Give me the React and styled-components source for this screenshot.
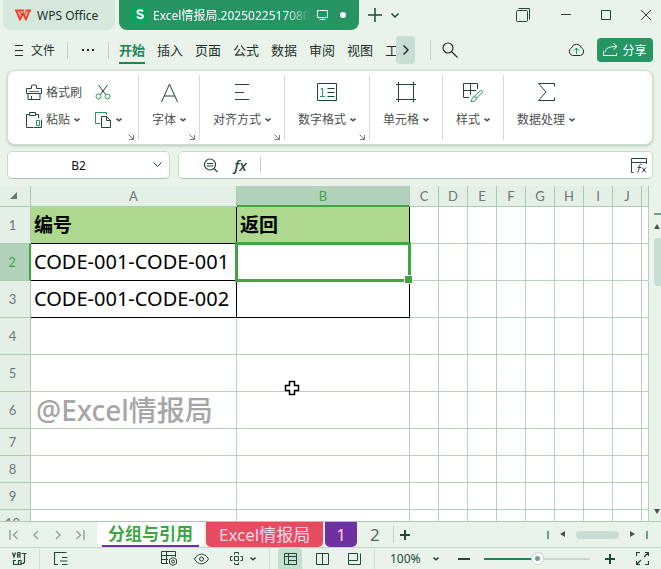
import React, { useState } from 'react'
import styled, { createGlobalStyle, css } from 'styled-components'

const GlobalStyle = createGlobalStyle`
    * {
        box-sizing: border-box;
    }
    html, body {
        margin: 0;
    }
    body {
        background: #e9f3ea;
        color: #24463a;
        font-family: 'Noto Sans', 'Noto Sans CJK SC', sans-serif;
        font-size: 12px;
    }
    button, input, select {
        font-family: inherit;
        font-size: inherit;
        color: inherit;
        background: none;
        border: 0;
        padding: 0;
        margin: 0;
    }
    button {
        display: flex;
        align-items: center;
        justify-content: center;
        flex: none;
        white-space: nowrap;
    }
`

const Window = styled.div`
    display: flex;
    flex-direction: column;
    height: 100vh;
    overflow: hidden;
`

const Icon = styled.svg`
    display: block;
    flex: none;
    fill: none;
    stroke: currentColor;
    stroke-width: ${p => p.$weight || 1};
`

const Spacer = styled.div`
    flex: ${p => p.$width ? 'none' : 1};
    width: ${p => p.$width};
`

const Divider = styled.span`
    flex: none;
    width: 1px;
    height: ${p => p.$height || '100%'};
    background: ${p => p.$color || '#c5cfc8'};
`

/* title bar */

const TitleBar = styled.header`
    display: flex;
    flex: none;
    gap: 4px;
    height: 30px;
    padding-left: 3px;
`

const HomeTab = styled.button`
    justify-content: flex-start;
    gap: 6px;
    width: 112px;
    padding-left: 12px;
    border-radius: 0 0 8px 8px;
    background: #d6e8dc;
    color: #24302b;
`

const FileTab = styled.div`
    display: flex;
    flex: none;
    align-items: center;
    width: 240px;
    padding: 0 12px;
    border-radius: 0 0 8px 8px;
    background: #269463;
    color: #fff;
`

const FileName = styled.span`
    flex: 1;
    margin: 0 5px 0 4px;
    overflow: hidden;
    white-space: nowrap;
    mask-image: linear-gradient(to right, #000 84%, transparent);
`

const Unsaved = styled.span`
    width: 6px;
    height: 6px;
    margin: 0 1px 0 12px;
    border-radius: 50%;
    background: #fff;
`

const Controls = styled.div`
    display: flex;
    gap: 10px;
`

const SmallButton = styled.button`
    width: ${p => p.$width || '20px'};
    height: 100%;
`

/* menu */

const MenuBar = styled.nav`
    display: flex;
    flex: none;
    align-items: center;
    height: 40px;
    padding: 0 8px 0 14px;
    font-size: 13px;
    color: #24302b;
`

const FileMenu = styled.button`
    gap: 7px;
    margin-right: 12px;
    font-size: 12px;
`

const MenuTabs = styled.div`
    display: flex;
    flex: 1;
    gap: 12px;
    height: 28px;
    margin-left: 10px;
    min-width: 0;
    overflow: hidden;
`

const MenuTab = styled.button`
    border-bottom: 2px solid ${p => p.$active ? '#1f8559' : 'transparent'};
    color: ${p => p.$active ? '#1f8559' : '#24302b'};
    font-weight: ${p => p.$active ? 700 : 400};
`

const MoreButton = styled.button`
    width: 19px;
    height: 28px;
    border-radius: 4px;
    background: #c8ded5;
`

const ShareButton = styled.button`
    gap: 4px;
    width: 56px;
    height: 24px;
    margin-left: 12px;
    border-radius: 4px;
    background: #269463;
    color: #fff;
    font-size: 12px;
`

/* ribbon */

const Ribbon = styled.section`
    display: flex;
    flex: none;
    height: 75px;
    margin: 0 8px 0 7px;
    padding: 4px 0;
    border: 1px solid #d0ddd3;
    border-radius: 8px;
    background: #fff;
    color: #4b4f4d;
    box-shadow: 0 1px 3px rgba(60, 90, 70, 0.3);
`

const Group = styled.div`
    position: relative;
    display: flex;
    justify-content: center;
    padding: 0 13px;
    border-right: ${p => p.$last ? 0 : '1px solid #d8d8d8'};
`

const Clipboard = styled.div`
    display: grid;
    grid-template-columns: 57px 28px;
    grid-template-rows: 28px 28px;
    gap: 0 12px;
    padding: 3px 2px 0 5px;
`

const ToolButton = styled.button`
    justify-content: flex-start;
    gap: 4px;
`

const BigButton = styled.button`
    flex-direction: column;
    justify-content: flex-start;
    gap: 6px;
    padding-top: 7px;
`

const Label = styled.span`
    display: flex;
    align-items: center;
    gap: 4px;
    line-height: 20px;
`

const Launcher = styled.button`
    position: absolute;
    right: 4px;
    bottom: 0;
    color: #777;
`

/* formula bar */

const FormulaBar = styled.div`
    display: flex;
    flex: none;
    gap: 8px;
    height: 41px;
    padding: 6px 8px 7px 7px;
`

const Field = styled.div`
    display: flex;
    align-items: center;
    min-width: 0;
    width: ${p => p.$width};
    flex: ${p => p.$width ? 'none' : 1};
    height: 28px;
    border: 1px solid #c3dccb;
    border-bottom-color: #a9c5b2;
    border-radius: 5px;
    background: #fff;
`

const TextInput = styled.input`
    flex: 1;
    min-width: 0;
    height: 100%;
    text-align: ${p => p.$center ? 'center' : 'left'};
    padding-left: ${p => p.$center ? '4px' : '8px'};
    color: #111;
    outline: none;
`

const Fx = styled.i`
    font-size: 15px;
    font-weight: 500;
`

/* sheet */

const Workspace = styled.main`
    display: flex;
    flex: 1;
    min-height: 0;
`

const Sheet = styled.div`
    position: relative;
    flex: 1;
    min-width: 0;
    overflow: hidden;
    background: #fff;
`

const Grid = styled.table`
    width: 100%;
    table-layout: fixed;
    border-collapse: separate;
    border-spacing: 0;
    color: #000;
`

const Head = styled.th`
    height: 21px;
    padding: 0;
    border-right: 1px solid #a9cbb2;
    border-bottom: 1px solid #a9cbb2;
    background: #e4f0e5;
    color: #6f7773;
    font: 400 13px/16px Lato, sans-serif;
    ${p => p.$active && css`
        background: #b1d1ba;
        color: #3da642;
    `}
    ${p => p.$active === 'column' && css`
        border-bottom: 2px solid #3da642;
    `}
    ${p => p.$active === 'row' && css`
        border-right: 2px solid #3da642;
    `}
`

const RowNumber = styled.span`
    display: block;
    padding-right: 5px;
`

const Cell = styled.td`
    position: relative;
    height: ${p => p.$short ? '27px' : '37px'};
    padding: 0 0 0 3px;
    border-right: 1px solid ${p => p.$framed ? '#000' : '#b2d3ba'};
    border-bottom: 1px solid ${p => p.$framed ? '#000' : '#b2d3ba'};
    background: ${p => p.$title ? '#aed88e' : '#fff'};
    font-size: ${p => p.$title ? '19px' : '20px'};
    font-weight: ${p => p.$title ? 700 : 400};
    line-height: 26px;
    white-space: nowrap;
`

const Watermark = styled.span`
    display: block;
    padding-left: 2px;
    color: #a6a6a6;
    font-size: 28px;
    font-weight: 500;
`

const Selection = styled.div`
    position: absolute;
    z-index: 1;
    inset: -2px;
    border: 3px solid #3da642;

    &::after {
        content: '';
        position: absolute;
        right: -5px;
        bottom: -5px;
        width: 7px;
        height: 7px;
        border: 1px solid #fff;
        background: #3da642;
    }
`

const Pointer = styled(Icon)`
    position: absolute;
    top: 194px;
    left: 284px;
`

const VScroll = styled.div`
    display: flex;
    flex-direction: column;
    align-items: flex-end;
    width: 12px;
    padding: 27px 0 6px;
    background: #e9f3ea;
`

const ScrollArrow = styled.span`
    padding: 8px 0;
`

const SplitMark = styled.span`
    width: ${p => p.$vertical ? '2px' : '7px'};
    height: ${p => p.$vertical ? '8px' : '2px'};
    background: #6b9f87;
`

const VThumb = styled.span`
    width: 7px;
    height: 48px;
    border-radius: 4px 0 0 4px;
    background: #c8ded5;
`

/* sheet tabs */

const SheetBar = styled.div`
    display: flex;
    flex: none;
    align-items: center;
    height: 26px;
    border-top: 1px solid #a9cbb2;
`

const SheetNav = styled.div`
    display: flex;
    height: 100%;
    padding: 0 6px 0 3px;
    color: #93a79c;
`

const SheetTab = styled.button`
    height: 25px;
    margin-right: 2px;
    padding: 0 ${p => p.$narrow ? '11px' : '13px'};
    border-radius: 0 0 5px 5px;
    background: ${p => p.$color};
    color: #f4dbe8;
    font-size: 17px;
    line-height: 22px;
    align-self: flex-start;
    ${p => p.$active && css`
        padding: 0 5px;
        background: #fff;
        color: #3da642;
        font-weight: 700;
    `}
    ${p => p.$plain && css`
        color: #5b6861;
    `}
`

const Underlined = styled.span`
    padding: 0 6px;
    border-bottom: 2px solid #7030a0;
`

const HScroll = styled.div`
    display: flex;
    align-items: center;
    padding-right: 13px;
`

const HThumb = styled.span`
    width: 43px;
    height: 8px;
    border-radius: 4px;
    background: #c8ded5;
`

const ArrowBox = styled.span`
    padding: 0 10px;
`

/* status bar */

const StatusBar = styled.footer`
    display: flex;
    flex: none;
    align-items: center;
    height: 22px;
    padding-right: 3px;
    border-top: 1px solid #c5d6ca;
    color: #24463a;
`

const StatusButton = styled.button`
    gap: 7px;
    width: ${p => p.$width || '32px'};
    height: 100%;
`

const ViewButton = styled.button`
    width: 24px;
    height: 100%;
    margin: 0 4px;
    border-radius: 3px 3px 0 0;
    background: ${p => p.$active ? '#c3e0cf' : 'none'};
`

const ZoomBox = styled.label`
    display: flex;
    align-items: center;
    margin: 0 9px 0 15px;
`

const ZoomSelect = styled.select`
    appearance: none;
    width: 43px;
    outline: none;
`

const ZoomRange = styled.input`
    appearance: none;
    width: 106px;
    height: 12px;
    margin: 0 4px;
    background: linear-gradient(#1f8559, #1f8559) left center / 50% 2px no-repeat,
        linear-gradient(#c9d5ce, #c9d5ce) center / 100% 2px no-repeat;

    &::-webkit-slider-thumb {
        appearance: none;
        width: 11px;
        height: 11px;
        border: 3px solid #fff;
        border-radius: 50%;
        background: #6b9f87;
        box-shadow: 0 0 0 1px #c9d5ce;
    }
`

const Caret = () => (
    <Icon width="6" height="4" $weight="1.6">
        <path d="M.5 .6L3 2.8 5.5 .6" />
    </Icon>
)

const Triangle = ({ d, label }) => (
    <Icon width="7" height="7" role="img" aria-label={label}>
        <path d={d} fill="#40594e" stroke="none" />
    </Icon>
)

const Corner = () => (
    <Icon width="6" height="6">
        <path d="M.5 .5l4.5 4.5M5.5 1v4.5H1" />
    </Icon>
)

const groups = [
    { name: '字体', launcher: true, icon: <path d="M3.5 20L11.5 2l8 18M6 14h11" /> },
    { name: '对齐方式', launcher: true, icon: <path d="M4 2.5h14M4 10.5h9M4 17.5h14" /> },
    {
        name: '数字格式',
        launcher: true,
        icon: <>
            <path d="M1.5 1.5h19v17h-19zM11.5 6.5h7M11.5 10.5h7M11.5 14.5h7" />
            <path stroke="#269463" d="M4.5 7.5l2-1.5v9M4 14.5h5" />
        </>
    },
    { name: '单元格', icon: <path d="M3.5 0v20M18.5 0v20M1 2.5h20M1 17.5h20" /> },
    {
        name: '样式',
        icon: <>
            <path d="M7 15.5H1.5v-14h14V7M1.5 8.500H14M8.5 1.5v11" />
            <path stroke="#269463" d="M19.5 8.5c1 0 1.5 1 1 1.7l-6 6-2-2 6-5.5zM12.5 14.2l2 2c-.5 3-3 3.500-5.500 3.300 1.200-1.500.7-4.500 3.500-5.300z" />
        </>
    },
    { name: '数据处理', icon: <path d="M19.5 4.5V1.5h-16L11 10 3.5 18.5h16v-3" /> }
]

const menu = ['开始', '插入', '页面', '公式', '数据', '审阅', '视图', '工具']

const columns = ['A', 'B', 'C', 'D', 'E', 'F', 'G', 'H', 'I', 'J', '']

const rows = [1, 2, 3, 4, 5, 6, 7, 8, 9, 10]

const values = {
    A1: '编号',
    B1: '返回',
    A2: 'CODE-001-CODE-001',
    A3: 'CODE-001-CODE-002',
    A6: <Watermark>@Excel情报局</Watermark>,
    B2: <Selection />
}

const Title = () => (
    <TitleBar>
        <HomeTab>
            <Icon width="16" height="12">
                <path stroke="#f0412f" strokeWidth="2" strokeLinejoin="round" d="M0 1.500h9.500M1.500 2l3.500 8.500L8 4l3 6.500L14.500 1.500M11 1.500h5" />
                <path stroke="#f0412f" strokeWidth="1.5" d="M4.500 2l2 4M11.500 2L9 7" />
            </Icon>
            WPS Office
        </HomeTab>
        <FileTab>
            <Icon width="18" height="18">
                <rect x="0" y="0" width="17" height="17" rx="2" fill="#08a45e" stroke="none" />
                <path d="M12 5.500C11 3.800 6.500 3.800 6.500 6.200c0 2.600 5.500 1.400 5.500 4.100 0 2.400-4.800 2.400-6 .3" stroke="#fff" strokeWidth="2" />
            </Icon>
            <FileName>Excel情报局.20250225170801</FileName>
            <Icon width="12" height="12">
                <path d="M1.500 1.500h10v7h-10zM6.500 8.500v2M3.500 10.500h6" />
            </Icon>
            <Unsaved />
        </FileTab>
        <SmallButton aria-label="新建" $width="24px">
            <Icon width="14" height="14" $weight="1.5"><path d="M7 0v14M0 7h14" /></Icon>
        </SmallButton>
        <SmallButton aria-label="标签列表" $width="8px">
            <Icon width="8" height="5" $weight="1.5"><path d="M.5 .5L4 4 7.500 .5" /></Icon>
        </SmallButton>
        <Spacer />
        <Controls>
            <SmallButton aria-label="窗口" $width="36px">
                <Icon width="14" height="14">
                    <rect x=".5" y="2.500" width="11" height="11" rx="1" />
                    <path d="M2.500 .5h11v11" />
                </Icon>
            </SmallButton>
            <SmallButton aria-label="最小化" $width="30px">
                <Icon width="10" height="10"><path d="M0 4.500h10" /></Icon>
            </SmallButton>
            <SmallButton aria-label="最大化" $width="30px">
                <Icon width="10" height="10"><path d="M.5 .5h9v9h-9z" /></Icon>
            </SmallButton>
            <SmallButton aria-label="关闭" $width="30px">
                <Icon width="10" height="10"><path d="M0 0l10 10M10 0L0 10" /></Icon>
            </SmallButton>
        </Controls>
    </TitleBar>
)

const Menu = () => (
    <MenuBar>
        <FileMenu>
            <Icon width="10" height="12"><path d="M1 1.500h8M1 6.500h8M1 11.500h8" /></Icon>
            文件
        </FileMenu>
        <Divider $height="17px" />
        <SmallButton aria-label="更多" $width="40px">
            <Icon width="14" height="2" $weight="2">
                <path d="M1 1h2M6 1h2M11 1h2" />
            </Icon>
        </SmallButton>
        <Divider $height="17px" />
        <MenuTabs>
            {menu.map(name => (
                <MenuTab key={name} $active={name === '开始'}>{name}</MenuTab>
            ))}
        </MenuTabs>
        <MoreButton aria-label="展开">
            <Icon width="6" height="10" $weight="1.5"><path d="M.5 .5L5 5 .5 9.500" /></Icon>
        </MoreButton>
        <Spacer $width="15px" />
        <Divider $height="20px" />
        <SmallButton aria-label="查找" $width="38px">
            <Icon width="16" height="16" $weight="1.2">
                <circle cx="6" cy="6" r="5" />
                <path d="M9.500 9.500l6 6" />
            </Icon>
        </SmallButton>
        <Spacer $width="98px" />
        <SmallButton aria-label="云端" $width="18px">
            <Icon width="17" height="14">
                <path d="M4.500 12.500a4 4 0 0 1-1-7.500 5.200 5.200 0 0 1 10 0 4 4 0 0 1-1 7.500z" />
                <path stroke="#269463" d="M8.500 11V5M6 7.500L8.500 5 11 7.500" />
            </Icon>
        </SmallButton>
        <ShareButton>
            <Icon width="15" height="14">
                <path d="M.5 8v4.500h13V10M2 9c1-4 4-5.500 11.500-5.500M10.500 .5l3.500 3-3.500 3" />
            </Icon>
            <span>分享</span>
        </ShareButton>
    </MenuBar>
)

const Tools = () => (
    <Ribbon>
        <Group>
            <Clipboard>
                <ToolButton>
                    <Icon width="16" height="17">
                        <path stroke="#24463a" d="M.5 9.500v-5h5V1.500Q8 0 10.500 1.500v3h5v5zM2 9.500v6h12v-6M5.500 12v3.500" />
                        <path stroke="#269463" d="M3 7.500h10" />
                    </Icon>
                    格式刷
                </ToolButton>
                <ToolButton aria-label="剪切">
                    <Icon width="16" height="15">
                        <path stroke="#24463a" d="M3.500 0l7 9.500M12.500 0l-7 9.500" />
                        <circle cx="3.500" cy="11.500" r="2.500" stroke="#269463" />
                        <circle cx="12.500" cy="11.500" r="2.500" stroke="#269463" />
                    </Icon>
                </ToolButton>
                <ToolButton>
                    <Icon width="16" height="16">
                        <path stroke="#24463a" d="M7 15.500H.5v-13H3M10 2.500h2.500V6M3.500 .5h6v3h-6z" />
                        <path stroke="#24463a" d="M7.500 15.500h8M15.500 15.500v-8" />
                        <path stroke="#269463" d="M10.500 8.500h3v5h-3z" />
                    </Icon>
                    <Label>粘贴 <Caret /></Label>
                </ToolButton>
                <ToolButton aria-label="复制">
                    <Icon width="17" height="16">
                        <path stroke="#269463" d="M5 11.500H.5V.5h11V3" />
                        <path stroke="#24463a" d="M6.500 4.500h5l4 4v7h-9zM11.500 4.500v4h4" />
                    </Icon>
                    <Caret />
                </ToolButton>
            </Clipboard>
            <Launcher aria-label="剪贴板设置"><Corner /></Launcher>
        </Group>
        {groups.map(({ name, launcher, icon }, i) => (
            <Group key={name} $last={i === groups.length - 1}>
                <BigButton>
                    <Icon width="22" height="22" color="#24463a">{icon}</Icon>
                    <Label>{name}<Caret /></Label>
                </BigButton>
                {launcher
                    ? <Launcher aria-label={name + '设置'}><Corner /></Launcher>
                    : null}
            </Group>
        ))}
    </Ribbon>
)

const Formula = () => (
    <FormulaBar>
        <Field $width="163px">
            <TextInput aria-label="名称框" defaultValue="B2" $center />
            <SmallButton aria-label="名称列表" $width="24px">
                <Icon width="9" height="6"><path d="M.5 .5l4 4 4-4" /></Icon>
            </SmallButton>
        </Field>
        <Field>
            <Spacer $width="20px" />
            <SmallButton aria-label="缩小" $width="22px">
                <Icon width="15" height="15" $weight="1.2">
                    <circle cx="7" cy="6.500" r="5.500" />
                    <path d="M4 5.500h6M4 8h6M11 10.500l3.500 3.500" />
                </Icon>
            </SmallButton>
            <SmallButton aria-label="插入函数" $width="39px">
                <Fx>fx</Fx>
            </SmallButton>
            <Divider $height="16px" />
            <TextInput aria-label="编辑栏" />
            <SmallButton aria-label="函数面板" $width="27px">
                <Icon width="18" height="17">
                    <path d="M3.500 15.500h-2v-14h15V7M1.500 5.500h15" />
                    <path d="M11.500 7.500c-2-1-2 1-2.500 4s-.5 4-2 3.500M7.500 10.500h3.500M12 10.500l4 5M16 10.500l-4 5" />
                </Icon>
            </SmallButton>
        </Field>
    </FormulaBar>
)

const Table = () => (
    <Workspace>
        <Sheet>
            <Grid>
                <colgroup>
                    <col width="31" />
                    <col width="206" />
                    <col width="173" />
                    {columns.slice(2, -1).map(name => <col key={name} width="29" />)}
                    <col />
                </colgroup>
                <thead>
                    <tr>
                        <Head>
                            <Icon width="26" height="8"><path d="M17 0v7h-7z" fill="#6f7773" stroke="none" /></Icon>
                        </Head>
                        {columns.map(name => (
                            <Head key={name} $active={name === 'B' ? 'column' : null}>{name}</Head>
                        ))}
                    </tr>
                </thead>
                <tbody>
                    {rows.map(row => (
                        <tr key={row}>
                            <Head scope="row" $active={row === 2 ? 'row' : null}>
                                <RowNumber>{row}</RowNumber>
                            </Head>
                            {columns.map(name => {
                                const framed = row < 4 && (name === 'A' || name === 'B')
                                return (
                                    <Cell
                                        key={name}
                                        $framed={framed}
                                        $title={framed && row === 1}
                                        $short={row > 6}
                                    >
                                        {values[name + row]}
                                    </Cell>
                                )
                            })}
                        </tr>
                    ))}
                </tbody>
            </Grid>
            <Pointer width="16" height="16" $weight="1.5">
                <path d="M5.500 1.500h5v4h4v5h-4v4h-5v-4h-4v-5h4z" fill="#fff" stroke="#000" />
            </Pointer>
        </Sheet>
        <VScroll>
            <SplitMark />
            <ScrollArrow><Triangle label="向上" d="M0 6h6L3 1z" /></ScrollArrow>
            <VThumb />
            <Spacer />
            <Triangle label="向下" d="M0 1h6L3 6z" />
        </VScroll>
    </Workspace>
)

const SheetTabs = () => (
    <SheetBar>
        <SheetNav>
            <SmallButton aria-label="第一张" $width="22px">
                <Icon width="10" height="10" $weight="1.5"><path d="M1 0v10M8.500 1l-4 4 4 4" /></Icon>
            </SmallButton>
            <SmallButton aria-label="上一张" $width="22px">
                <Icon width="6" height="10" $weight="1.5"><path d="M5 1L1 5l4 4" /></Icon>
            </SmallButton>
            <SmallButton aria-label="下一张" $width="22px">
                <Icon width="6" height="10" $weight="1.5"><path d="M1 1l4 4-4 4" /></Icon>
            </SmallButton>
            <SmallButton aria-label="最后一张" $width="22px">
                <Icon width="10" height="10" $weight="1.5"><path d="M9 0v10M1.500 1l4 4-4 4" /></Icon>
            </SmallButton>
        </SheetNav>
        <SheetTab $active><Underlined>分组与引用</Underlined></SheetTab>
        <SheetTab $color="#e64c60">Excel情报局</SheetTab>
        <SheetTab $color="#7030a0" $narrow>1</SheetTab>
        <SheetTab $plain $narrow>2</SheetTab>
        <Divider $height="17px" />
        <SmallButton aria-label="新建工作表" $width="22px">
            <Icon width="10" height="10" $weight="2"><path d="M5 0v10M0 5h10" /></Icon>
        </SmallButton>
        <Spacer />
        <HScroll>
            <SplitMark $vertical />
            <ArrowBox><Triangle label="向左" d="M6 0v6L1 3z" /></ArrowBox>
            <HThumb />
            <ArrowBox><Triangle label="向右" d="M1 0v6l5-3z" /></ArrowBox>
            <SplitMark $vertical />
        </HScroll>
    </SheetBar>
)

const Status = () => {
    const [zoom, setZoom] = useState('50')
    return (
        <StatusBar>
            <StatusButton aria-label="宏" $width="39px">
                <Icon width="15" height="14" $weight="1.2">
                    <path d="M.5 .5L2 5l1.500-4.500M5.500 .5v4.500H8V.5H5.500M5.500 2.800H8M9.500 1.500h5M12.500 1.500v8q0 2-2 2H9M1.500 8v4.500h5V8.500H9v4H6.500M1.500 8.500H4" />
                </Icon>
            </StatusButton>
            <Divider $color="#d3e0d7" />
            <StatusButton aria-label="大纲" $width="41px">
                <Icon width="14" height="13" $weight="1.2">
                    <path d="M12.500 .5H.5v12H4M8 5.500h5.500M6 9h7.500M8 12.500h5.500" />
                </Icon>
            </StatusButton>
            <Spacer />
            <StatusButton aria-label="表格设置">
                <Icon width="17" height="15">
                    <path d="M7 12.500H.5V.5h14V6M.5 4.500h14M.5 8.500H7M5.500 .5v12" />
                    <path d="M12 6.500l3.500 2v4L12 14.500l-3.500-2v-4z" />
                    <circle cx="12" cy="10.500" r="1.500" />
                </Icon>
            </StatusButton>
            <StatusButton aria-label="护眼模式">
                <Icon width="15" height="12">
                    <path d="M.5 6C4 -.5 11 -.5 14.500 6 11 12.500 4 12.500 .5 6z" />
                    <circle cx="7.500" cy="6" r="2" />
                </Icon>
            </StatusButton>
            <StatusButton aria-label="阅读模式" $width="52px">
                <Icon width="13" height="13">
                    <path d="M4.500 4.500h4v4h-4zM4.500 2.500v-2h4v2M4.500 10.500v2h4v-2M2.500 4.500h-2v4h2M10.500 4.500h2v4h-2" />
                </Icon>
                <Caret />
            </StatusButton>
            <Divider $color="#d3e0d7" />
            <Spacer $width="4px" />
            <ViewButton aria-label="普通视图" $active>
                <Icon width="13" height="12"><path d="M.5 .5h12v11H.5zM.5 3.500h12M4.500 .5v11M4.500 7.500h8" /></Icon>
            </ViewButton>
            <ViewButton aria-label="分页预览">
                <Icon width="13" height="12"><path d="M.5 .5h12v11H.5zM6.500 .5v11" /></Icon>
            </ViewButton>
            <ViewButton aria-label="页面布局">
                <Icon width="13" height="12"><path d="M.5 .5h9v7h-9zM.5 7.500v4h12V.5" /></Icon>
            </ViewButton>
            <Spacer $width="4px" />
            <Divider $color="#d3e0d7" />
            <ZoomBox>
                <ZoomSelect aria-label="缩放比例" defaultValue="100%">
                    <option>100%</option>
                </ZoomSelect>
                <Caret />
            </ZoomBox>
            <StatusButton aria-label="缩小">
                <Icon width="12" height="2" $weight="2"><path d="M0 1h12" /></Icon>
            </StatusButton>
            <ZoomRange
                type="range"
                aria-label="缩放"
                value={zoom}
                onChange={e => setZoom(e.target.value)}
            />
            <StatusButton aria-label="放大">
                <Icon width="10" height="10" $weight="2"><path d="M5 0v10M0 5h10" /></Icon>
            </StatusButton>
            <StatusButton aria-label="全屏">
                <Icon width="13" height="13" $weight="1.2">
                    <path d="M.5 4V.5H4M9 .5h3.500V4M12.500 9v3.500H9M4 12.500H.5V9M8 5L12 1M5 8l-4 4" />
                </Icon>
            </StatusButton>
        </StatusBar>
    )
}

export default function App() {
    return (
        <Window>
            <GlobalStyle />
            <Title />
            <Menu />
            <Tools />
            <Formula />
            <Table />
            <SheetTabs />
            <Status />
        </Window>
    )
}
